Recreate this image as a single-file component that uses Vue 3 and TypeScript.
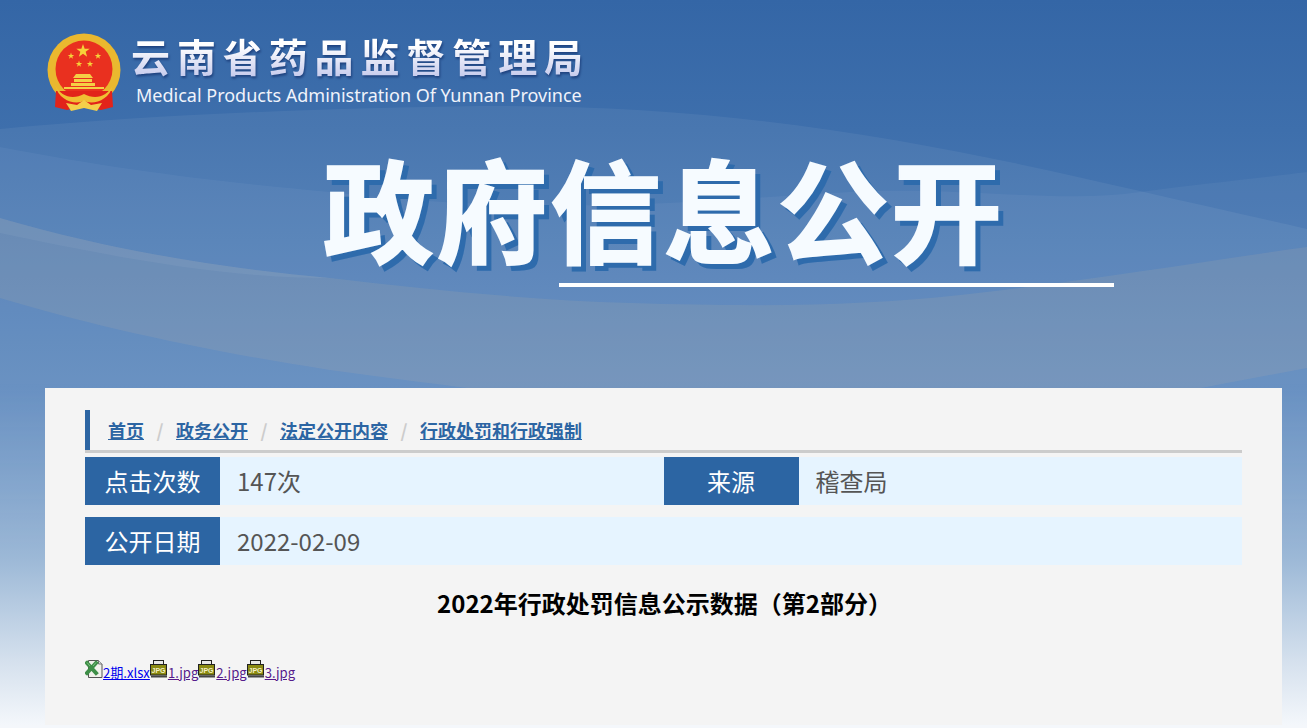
<script setup lang="ts">
const starPoints = (cx: number, cy: number, r: number): string => {
  const pts: string[] = []
  for (let i = 0; i < 10; i++) {
    const rad = i % 2 === 0 ? r : r * 0.4
    const a = -Math.PI / 2 + (i * Math.PI) / 5
    pts.push(`${(cx + rad * Math.cos(a)).toFixed(2)},${(cy + rad * Math.sin(a)).toFixed(2)}`)
  }
  return pts.join(' ')
}
const stars = [
  [36, 18, 7],
  [24, 23, 3.4],
  [32, 31, 3.4],
  [43, 31, 3.4],
  [51, 23, 3.4]
]
const crumbs = ['首页', '政务公开', '法定公开内容', '行政处罚和行政强制']
const jpgs = ['1.jpg', '2.jpg', '3.jpg']
</script>

<template>
  <div class="page">
    <svg class="swoosh" width="1307" height="560" viewBox="0 0 1307 560" aria-hidden="true">
      <path d="M0 129 C160 114 330 108 480 106 C760 104 960 150 1140 191 C1200 205 1260 218 1307 229 L1307 560 L0 560 Z" fill="#fff" fill-opacity=".06" />
      <path d="M0 147 C120 170 220 182 330 192 C560 218 700 200 850 192 C960 186 1060 204 1140 192 C1200 184 1260 178 1307 172 L1307 560 L0 560 Z" fill="#fff" fill-opacity=".045" />
      <path d="M0 218 C110 250 220 268 330 278 C430 290 530 300 630 303 C760 307 860 306 960 295 C1080 282 1200 262 1307 247 L1307 368 L1190 390 L600 405 C520 395 420 382 330 370 C200 350 90 325 0 298 Z" fill="#d0b898" fill-opacity=".13" />
      <path d="M0 218 C110 250 220 268 330 278 C220 278 110 256 0 233 Z" fill="#fff" fill-opacity=".05" />
    </svg>

    <header class="brand">
      <svg class="emblem" width="74" height="80" viewBox="0 0 74 80" aria-hidden="true">
        <circle cx="37" cy="37" r="36.5" fill="#eab82f" />
        <circle cx="37" cy="36" r="28.5" fill="#e9301f" />
        <path d="M9 58 H65 L66 74 L54 77 L37 73 L20 77 L8 74 Z" fill="#e2231a" />
        <polygon v-for="(s, i) in stars" :key="i" :points="starPoints(s[0], s[1], s[2])" fill="#f6d139" />
        <path d="M29 41 H43 L46 45 H26 Z M27 46 H45 V49 H27 Z M24 50 H48 V53 H24 Z M17 54 H57 V56 H17 Z" fill="#f5cf45" />
        <path d="M8 52 C14 64 26 67 37 61 C48 67 60 64 66 52 C62 68 46 72 37 68 C28 72 12 68 8 52 Z" fill="#f0bf33" />
        <path d="M19 70 L30 72 L37 67 L44 72 L55 70 L50 78 L37 75 L24 78 Z" fill="#f4cf4a" />
      </svg>
      <div class="brand-text">
        <div class="brand-cn">云南省药品监督管理局</div>
        <div class="brand-en">Medical Products Administration Of Yunnan Province</div>
      </div>
    </header>

    <section class="hero">
      <h1 class="hero-title">政府信息公开</h1>
      <div class="hero-line"></div>
    </section>

    <main class="card">
      <nav class="crumb-wrap">
        <div class="crumbs">
          <template v-for="(c, i) in crumbs" :key="c">
            <span v-if="i > 0" class="sep">/</span>
            <a class="crumb" href="#">{{ c }}</a>
          </template>
        </div>
      </nav>

      <div class="row">
        <div class="cell">
          <div class="label">点击次数</div>
          <div class="value">147次</div>
        </div>
        <div class="cell">
          <div class="label">来源</div>
          <div class="value">稽查局</div>
        </div>
      </div>
      <div class="row row-second">
        <div class="cell">
          <div class="label">公开日期</div>
          <div class="value">2022-02-09</div>
        </div>
      </div>

      <h2 class="doc-title">2022年行政处罚信息公示数据（第2部分）</h2>

      <div class="files">
        <svg class="file-icon" width="18" height="18" viewBox="0 0 18 18" aria-hidden="true">
          <path d="M3.5 .5 H13.5 L17 4 V17.5 H3.5 Z" fill="#f2f2ec" stroke="#555" stroke-width="1" />
          <path d="M13.5 .5 V4 H17" fill="#ddd" stroke="#777" stroke-width="1" />
          <path d="M2 3 L11 13 M11 3 L2 13" stroke="#3f8f48" stroke-width="4" stroke-linecap="square" />
          <path d="M2 2.5 L5 6 M11 2.5 L8 6" stroke="#7cc07f" stroke-width="1" />
        </svg><a class="file unvisited" href="#">2期.xlsx</a><template v-for="j in jpgs" :key="j"><svg class="file-icon" width="18" height="18" viewBox="0 0 18 18" aria-hidden="true">
          <rect x="3.5" y=".5" width="10" height="4" fill="#e8e8e8" stroke="#222" />
          <rect x=".5" y="4.5" width="16" height="10.5" fill="#8a8a12" stroke="#222" />
          <text x="8.5" y="12.5" text-anchor="middle" class="jpg-text">JPG</text>
          <rect x="1" y="15.5" width="16" height="2" fill="#444" />
        </svg><a class="file visited" href="#">{{ j }}</a></template>
      </div>
    </main>
  </div>
</template>

<style>
html,
body {
  margin: 0;
  background: #fff;
}
</style>

<style scoped>
.page {
  position: relative;
  width: 1307px;
  height: 728px;
  overflow: hidden;
  font-family: "Noto Sans CJK SC", "Noto Sans", sans-serif;
  background: linear-gradient(180deg, #3466a6 0, #3e6fac 130px, #5a86bc 388px, #9db9d7 560px, #d4e0ed 660px, #f4f7fb 725px);
}
.swoosh {
  position: absolute;
  left: 0;
  top: 0;
  -webkit-mask-image: linear-gradient(180deg, #000 380px, transparent 560px);
  mask-image: linear-gradient(180deg, #000 380px, transparent 560px);
}
.brand {
  position: relative;
  display: flex;
  height: 100px;
  padding: 33px 0 0 47px;
  box-sizing: content-box;
}
.emblem {
  flex: none;
}
.brand-text {
  margin-left: 10px;
}
.brand-cn {
  margin-top: -1px;
  height: 46px;
  font-size: 39px;
  line-height: 46px;
  font-weight: 700;
  letter-spacing: 6.9px;
  white-space: nowrap;
  color: transparent;
  background: linear-gradient(180deg, #fff 30%, #c4c9ec 100%);
  -webkit-background-clip: text;
  background-clip: text;
  filter: drop-shadow(1px 2px 1px rgba(20, 50, 110, 0.7));
}
.brand-en {
  margin: 5px 0 0 5px;
  font-family: "Noto Sans", sans-serif;
  font-size: 18px;
  line-height: 24px;
  color: #f0f3fb;
  white-space: nowrap;
}
.hero {
  position: relative;
  height: 255px;
}
.hero-title {
  margin: 0;
  padding: 9px 2px 0 323px;
  font-size: 111px;
  line-height: 130px;
  letter-spacing: 2.6px;
  font-weight: 700;
  white-space: nowrap;
  width: max-content;
  color: #f6fbff;
  -webkit-text-stroke: 2px #f6fbff;
  filter: drop-shadow(5px 5px 0 #2e6bac);
}
.hero-line {
  width: 555px;
  height: 4px;
  margin: 11px 0 0 559px;
  background: #fff;
}
.card {
  position: relative;
  box-sizing: border-box;
  width: 1237px;
  height: 337px;
  margin-left: 45px;
  padding: 22px 40px 0;
  background: #f4f4f4;
}
.crumb-wrap {
  border-bottom: 3px solid #ccc;
  margin-bottom: 4px;
}
.crumbs {
  display: flex;
  align-items: center;
  height: 40px;
  border-left: 5px solid #2c65a3;
  padding-left: 18px;
  font-size: 18px;
  line-height: 24px;
  box-sizing: border-box;
}
.crumb {
  font-weight: 700;
  color: #2c65a3;
  text-decoration: underline;
  white-space: nowrap;
}
.sep {
  width: 32px;
  text-align: center;
  font-weight: 700;
  color: #ccc;
}
.row {
  display: flex;
  height: 48px;
  background: #e6f4ff;
}
.row-second {
  margin-top: 12px;
}
.cell {
  display: flex;
  width: 579px;
}
.label {
  width: 135px;
  height: 48px;
  flex: none;
  font-size: 24px;
  line-height: 48px;
  text-align: center;
  color: #fff;
  background: #2c65a3;
}
.value {
  padding-left: 17px;
  font-size: 24px;
  line-height: 47px;
  color: #555;
  white-space: nowrap;
}
.doc-title {
  margin: 20px 0 0;
  padding-left: 2px;
  font-size: 24px;
  line-height: 36px;
  font-weight: 700;
  text-align: center;
  color: #000;
}
.files {
  display: flex;
  align-items: flex-start;
  margin-top: 39px;
  font-size: 13.1px;
  line-height: 18px;
}
.file-icon {
  flex: none;
}
.file {
  margin-top: 4px;
  text-decoration: underline;
  white-space: nowrap;
}
.unvisited {
  color: #0000ee;
}
.visited {
  color: #551a8b;
}
.jpg-text {
  font-family: "Liberation Sans", sans-serif;
  font-size: 7px;
  font-weight: 700;
  fill: #f4f0c8;
}
</style>
